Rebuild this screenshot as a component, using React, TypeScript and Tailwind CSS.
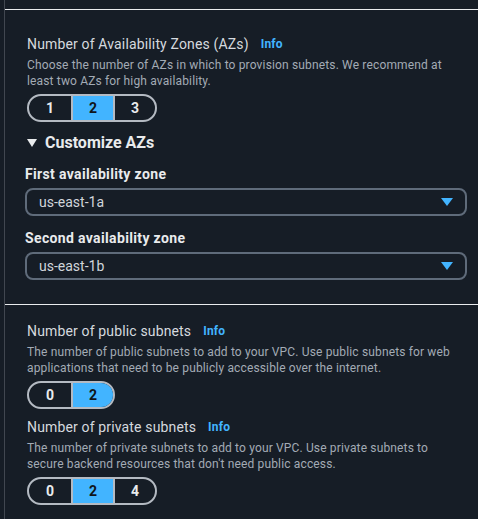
import React from 'react';

type SegProps = { options: string[]; selected: string };

function Segmented({ options, selected }: SegProps) {
  return (
    <div className="flex w-fit h-[28px] rounded-full border-2 border-[#b4bac2] overflow-hidden">
      {options.map((opt, i) => (
        <div
          key={opt}
          className={`w-[42px] flex items-center justify-center text-[14px] font-bold ${
            i > 0 ? 'border-l-2 border-[#b4bac2]' : ''
          } ${opt === selected ? 'bg-[#42b4ff] text-[#0f141a]' : 'text-[#e9ebed]'}`}
        >
          {opt}
        </div>
      ))}
    </div>
  );
}

function Select({ value }: { value: string }) {
  return (
    <div className="mt-[4px] h-[28px] mr-[11px] rounded-lg border-2 border-[#5f6b7a] flex items-center justify-between pl-[12px] pr-[12px]">
      <span className="text-[14px] text-[#d1d5db]">{value}</span>
      <svg width="12" height="9" viewBox="0 0 12 9">
        <path d="M0 0 H12 L6 8 Z" fill="#42b4ff" />
      </svg>
    </div>
  );
}

function FieldHeader({ title }: { title: string }) {
  return (
    <div className="flex items-center gap-[12px] h-[20px]">
      <span className="text-[14px] tracking-[0.15px] text-[#d5d9df]">{title}</span>
      <span className="text-[12px] font-bold tracking-[0.2px] text-[#42b4ff]">Info</span>
    </div>
  );
}

function Description({ children }: { children: React.ReactNode }) {
  return (
    <p className="mt-[3px] text-[12px] leading-[16px] tracking-[0.15px] text-[#a3abb5]">
      {children}
    </p>
  );
}

export default function App() {
  return (
    <div
      className="min-h-screen bg-[#161d26] pl-[4px]"
      style={{ fontFamily: 'Roboto, "Open Sans", sans-serif' }}
    >
      <div className="min-h-[519px] border-l border-[#414750]">
        <div className="h-[9px]" />
        <div className="border-t border-[#e9ebed]" />

        {/* Availability zones */}
        <div className="pt-[24px] pb-[24px] pl-[20px]">
          <div className="pl-[2px]">
            <FieldHeader title="Number of Availability Zones (AZs)" />
            <Description>
              Choose the number of AZs in which to provision subnets. We recommend at
              <br />
              least two AZs for high availability.
            </Description>
            <div className="mt-[5px]">
              <Segmented options={['1', '2', '3']} selected="2" />
            </div>
            <div className="mt-[10px] flex items-center gap-[8px] h-[22px]">
              <svg width="10" height="8" viewBox="0 0 10 8">
                <path d="M0 0 H10 L5 8 Z" fill="#e9ebed" />
              </svg>
              <span className="text-[16px] font-bold text-[#e9ebed]">Customize AZs</span>
            </div>
          </div>

          <div className="mt-[10px] text-[14px] leading-[20px] font-bold tracking-[0.35px] text-[#e9ebed]">
            First availability zone
          </div>
          <Select value="us-east-1a" />
          <div className="mt-[12px] text-[14px] leading-[20px] font-bold tracking-[0.35px] text-[#e9ebed]">
            Second availability zone
          </div>
          <Select value="us-east-1b" />
        </div>

        <div className="border-t border-[#e9ebed]" />

        {/* Subnets */}
        <div className="pt-[16px] pl-[22px]">
          <FieldHeader title="Number of public subnets" />
          <Description>
            The number of public subnets to add to your VPC. Use public subnets for web
            <br />
            applications that need to be publicly accessible over the internet.
          </Description>
          <div className="mt-[5px]">
            <Segmented options={['0', '2']} selected="2" />
          </div>

          <div className="mt-[8px]">
            <FieldHeader title="Number of private subnets" />
          </div>
          <Description>
            The number of private subnets to add to your VPC. Use private subnets to
            <br />
            secure backend resources that don't need public access.
          </Description>
          <div className="mt-[5px]">
            <Segmented options={['0', '2', '4']} selected="2" />
          </div>
        </div>
      </div>
    </div>
  );
}
